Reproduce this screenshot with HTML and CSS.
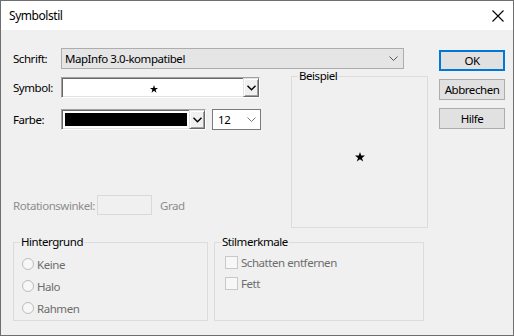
FILE: index.html
```html
<!DOCTYPE html>
<html>
<head>
<meta charset="utf-8">
<link rel="stylesheet" href="styles.css">
</head>
<body>
<div class="window">
  <div class="titlebar">
    <span class="title">Symbolstil</span>
    <svg class="close" width="12" height="12" viewBox="0 0 12 12"><path d="M0.5 0.5 L11.5 11.5 M11.5 0.5 L0.5 11.5" stroke="#000" stroke-width="1.1" fill="none"/></svg>
  </div>
  <div class="body">
    <div class="main">
      <div class="row schrift">
        <span class="lbl">Schrift:</span>
        <div class="combo flat"><span>MapInfo 3.0-kompatibel</span>
          <svg class="chev" width="9" height="5" viewBox="0 0 9 5"><path d="M0.5 0.5 L4.5 4.5 L8.5 0.5" stroke="#555" fill="none"/></svg>
        </div>
      </div>
      <div class="mid">
        <div class="leftcol">
          <div class="row symbol">
            <span class="lbl">Symbol:</span>
            <div class="sunken sym">
              <div class="symfield">
                <svg width="8" height="8" viewBox="0 0 10 10"><polygon points="5,0 6.2,3.6 10,3.6 7,5.9 8.1,9.6 5,7.3 1.9,9.6 3,5.9 0,3.6 3.8,3.6" fill="#000"/></svg>
              </div>
              <div class="dbtn"><svg width="9" height="6" viewBox="0 0 9 6"><path d="M0.5 0.8 L4.5 4.8 L8.5 0.8" stroke="#000" stroke-width="1.4" fill="none"/></svg></div>
            </div>
          </div>
          <div class="row farbe">
            <span class="lbl">Farbe:</span>
            <div class="sunken col">
              <div class="colfield"><div class="swatch"></div></div>
              <div class="dbtn"><svg width="9" height="6" viewBox="0 0 9 6"><path d="M0.5 0.8 L4.5 4.8 L8.5 0.8" stroke="#000" stroke-width="1.4" fill="none"/></svg></div>
            </div>
            <div class="combo size"><span>12</span>
              <svg class="chev" width="9" height="5" viewBox="0 0 9 5"><path d="M0.5 0.5 L4.5 4.5 L8.5 0.5" stroke="#777" fill="none"/></svg>
            </div>
          </div>
          <div class="row rot">
            <span class="dis rotlbl">Rotationswinkel:</span>
            <div class="rotinput"></div>
            <span class="dis grad">Grad</span>
          </div>
        </div>
        <fieldset class="group beispiel">
          <legend>Beispiel</legend>
          <div class="preview">
            <svg width="10" height="10" viewBox="0 0 10 10"><polygon points="5,0 6.2,3.6 10,3.6 7,5.9 8.1,9.6 5,7.3 1.9,9.6 3,5.9 0,3.6 3.8,3.6" fill="#000"/></svg>
          </div>
        </fieldset>
      </div>
      <div class="groups">
        <fieldset class="group hinter">
          <legend>Hintergrund</legend>
          <div class="opts">
            <div class="opt"><span class="radio"></span><span class="dis2">Keine</span></div>
            <div class="opt"><span class="radio"></span><span class="dis2">Halo</span></div>
            <div class="opt"><span class="radio"></span><span class="dis2">Rahmen</span></div>
          </div>
        </fieldset>
        <fieldset class="group stil">
          <legend>Stilmerkmale</legend>
          <div class="chks">
            <div class="chk"><span class="box"></span><span class="dis2">Schatten entfernen</span></div>
            <div class="chk"><span class="box"></span><span class="dis2">Fett</span></div>
          </div>
        </fieldset>
      </div>
    </div>
    <div class="buttons">
      <div class="btn default">OK</div>
      <div class="btn">Abbrechen</div>
      <div class="btn">Hilfe</div>
    </div>
  </div>
</div>
</body>
</html>
```
FILE: styles.css
```css
* { box-sizing: border-box; }
html, body { margin: 0; padding: 0; background: #fff; }
body {
  font-family: "Noto Sans", "Open Sans", sans-serif;
  font-size: 11.5px;
  letter-spacing: -0.45px;
  color: #000;
}
.window {
  width: 514px;
  height: 336px;
  border: 1px solid #6f6f6f;
  background: #f0f0f0;
  display: flex;
  flex-direction: column;
}
.titlebar {
  height: 29px;
  background: #fff;
  display: flex;
  align-items: center;
  justify-content: space-between;
  padding: 0 9px 0 8px;
  flex: none;
}
.title { line-height: 16px; font-size: 12px; }
.close { display: block; }
.body {
  display: flex;
  padding: 18px 8px 0 12px;
}
.main { width: 415px; flex: none; display: flex; flex-direction: column; }
.row { display: flex; align-items: center; }
.lbl { width: 48px; flex: none; line-height: 16px; }
.combo {
  height: 21px;
  flex: none;
  border: 1px solid #adadad;
  display: flex;
  align-items: center;
  justify-content: space-between;
  padding: 0 5px 0 3px;
}
.combo.flat { width: 343px; background: #e5e5e5; }
.chev { display: block; }
.combo.size {
  width: 49px;
  margin-left: 6px;
  background: #fff;
  border-color: #7a7a7a;
  padding-left: 5px;
  padding-right: 4px;
}
.mid { display: flex; align-items: flex-start; }
.leftcol { width: 247px; flex: none; display: flex; flex-direction: column; }
.symbol { margin-top: 8px; }
.farbe { margin-top: 11px; }
.sunken {
  height: 21px;
  flex: none;
  display: flex;
  border-style: solid;
  border-width: 1px;
  border-color: #a0a0a0 #fff #fff #a0a0a0;
  box-shadow: inset 1px 1px 0 #696969, inset -1px -1px 0 #e3e3e3;
  padding: 1px;
  background: #fff;
}
.sunken.sym { width: 199px; }
.sunken.col { width: 145px; }
.symfield {
  flex: 1;
  display: flex;
  align-items: center;
  justify-content: center;
  padding-left: 2px;
  padding-top: 2px;
}
.symfield svg { display: block; }
.colfield { flex: 1; padding: 2px; }
.swatch { background: #000; height: 100%; }
.dbtn {
  width: 16px;
  background: #f0f0f0;
  border-style: solid;
  border-width: 1px;
  border-color: #e3e3e3 #696969 #696969 #e3e3e3;
  box-shadow: inset 1px 1px 0 #fff, inset -1px -1px 0 #a0a0a0;
  display: flex;
  align-items: center;
  justify-content: center;
  margin: -1px -1px -1px 0;
}
.dbtn svg { display: block; }
.rot { margin-top: 65px; }
.dis { color: #8d8d8d; }
.dis2 { color: #6d6d6d; }
.rotlbl { width: 84px; flex: none; white-space: nowrap; }
.rotinput {
  width: 55px;
  height: 20px;
  flex: none;
  border: 1px solid #d9d9d9;
  background: #f0f0f0;
}
.grad { margin-left: 8px; }
fieldset.group {
  margin: 0;
  padding: 0;
  border: 1px solid #dcdcdc;
  min-width: 0;
  flex: none;
}
fieldset.group legend {
  padding: 0 1px;
  margin-left: 6px;
  line-height: 14px;
}
fieldset.beispiel {
  width: 137px;
  height: 159px;
  margin-left: 31px;
}
.preview {
  display: flex;
  justify-content: center;
  padding-top: 69px;
}
.preview svg { display: block; }
.groups {
  display: flex;
  gap: 6px;
  margin-top: 7px;
}
.hinter { width: 195px; height: 86px; }
.stil { width: 210px; height: 86px; }
.opts { padding: 4px 0 0 8px; }
.opt { display: flex; align-items: center; height: 22px; }
.radio {
  width: 12px;
  height: 12px;
  border-radius: 50%;
  border: 1px solid #bcbcbc;
  background: #f7f7f7;
  margin-right: 3px;
  flex: none;
}
.chks { padding: 3px 0 0 10px; }
.chk { display: flex; align-items: center; height: 21px; }
.box {
  width: 13px;
  height: 13px;
  border: 1px solid #c8c8c8;
  background: #f7f7f7;
  margin-right: 3px;
  flex: none;
}
.buttons {
  margin-left: 11px;
  display: flex;
  flex-direction: column;
  gap: 8px;
  padding-top: 2px;
}
.btn {
  width: 66px;
  height: 21px;
  border: 1px solid #adadad;
  background: #e1e1e1;
  display: flex;
  align-items: center;
  justify-content: center;
}
.btn.default { border: 2px solid #0078d7; }
```
